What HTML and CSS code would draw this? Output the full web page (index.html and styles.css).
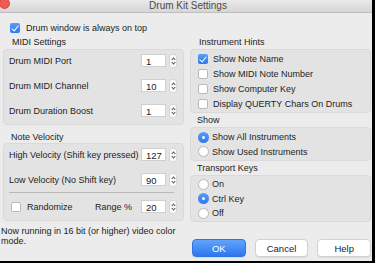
FILE: index.html
```html
<!DOCTYPE html>
<html lang="en">
<head>
    <meta charset="UTF-8">
    <title>Drum Kit Settings</title>
    <link rel="stylesheet" href="styles.css">
</head>
<body>
    <div class="window">
        <div class="titlebar">
            <span class="close"></span>
            Drum Kit Settings
        </div>
        <div class="content">
            <div class="check topCheck"><span class="box on"></span>Drum window is always on top</div>
            <div class="cols">
                <div class="col">
                    <div class="groupTitle">MIDI Settings</div>
                    <div class="panel midi">
                        <div class="field"><span>Drum MIDI Port</span><span class="spin"><span class="num">1</span><span class="stepper"></span></span></div>
                        <div class="field"><span>Drum MIDI Channel</span><span class="spin"><span class="num">10</span><span class="stepper"></span></span></div>
                        <div class="field"><span>Drum Duration Boost</span><span class="spin"><span class="num">1</span><span class="stepper"></span></span></div>
                    </div>
                    <div class="groupTitle second">Note Velocity</div>
                    <div class="panel velocity">
                        <div class="field"><span>High Velocity (Shift key pressed)</span><span class="spin"><span class="num">127</span><span class="stepper"></span></span></div>
                        <div class="field"><span>Low Velocity (No Shift key)</span><span class="spin"><span class="num">90</span><span class="stepper"></span></span></div>
                        <div class="sep"></div>
                        <div class="field">
                            <span class="check"><span class="box"></span>Randomize</span>
                            <span class="range">Range %</span>
                            <span class="spin"><span class="num">20</span><span class="stepper"></span></span>
                        </div>
                    </div>
                    <p class="status">Now running in 16 bit (or higher) video color mode.</p>
                </div>
                <div class="col">
                    <div class="groupTitle">Instrument Hints</div>
                    <div class="panel hints">
                        <div class="check"><span class="box on"></span>Show Note Name</div>
                        <div class="check"><span class="box"></span>Show MIDI Note Number</div>
                        <div class="check"><span class="box"></span>Show Computer Key</div>
                        <div class="check"><span class="box"></span>Display QUERTY Chars On Drums</div>
                    </div>
                    <div class="groupTitle small">Show</div>
                    <div class="panel radios">
                        <div class="radio"><span class="dot on"></span>Show All Instruments</div>
                        <div class="radio"><span class="dot"></span>Show Used Instruments</div>
                    </div>
                    <div class="groupTitle small">Transport Keys</div>
                    <div class="panel radios transport">
                        <div class="radio"><span class="dot"></span>On</div>
                        <div class="radio"><span class="dot on"></span>Ctrl Key</div>
                        <div class="radio"><span class="dot"></span>Off</div>
                    </div>
                    <div class="buttons">
                        <button class="primary">OK</button>
                        <button>Cancel</button>
                        <button>Help</button>
                    </div>
                </div>
            </div>
        </div>
    </div>
</body>
</html>
```

FILE: styles.css
```css
body {
    margin: 0;
    padding: 0;
    overflow: hidden;
    background-color: #000;
    font-family: "Liberation Sans", Arial, sans-serif;
    font-size: 9px;
    color: #232323;
}

.window {
    width: 372px;
    height: 261px;
    background-color: #ececec;
    position: relative;
    overflow: hidden;
}

.titlebar {
    height: 12px;
    line-height: 12px;
    text-align: center;
    font-size: 10px;
    color: #4a4a4a;
    background: linear-gradient(#e9e9e9, #d6d6d6);
    border-bottom: 1px solid #bdbdbd;
    padding-left: 4px;
}

.close {
    position: absolute;
    left: -1px;
    top: -2px;
    width: 11px;
    height: 11px;
    border-radius: 50%;
    background-color: #ee5b55;
    border: 1px solid #d9433d;
    box-sizing: border-box;
}

.content {
    padding: 7px 1px 0 3px;
}

.check, .radio {
    display: flex;
    align-items: center;
    gap: 5px;
    height: 15px;
}

.topCheck {
    padding-left: 7px;
    gap: 6px;
}

.box {
    width: 10px;
    height: 10px;
    box-sizing: border-box;
    border: 1px solid #b9b9b9;
    border-radius: 2px;
    background-color: #fff;
    position: relative;
}

.box.on {
    border: none;
    background: linear-gradient(#5a9cf8, #2d78f0);
}

.box.on::after {
    content: "";
    position: absolute;
    left: 3px;
    top: 1px;
    width: 3px;
    height: 6px;
    border: solid #fff;
    border-width: 0 1.5px 1.5px 0;
    transform: rotate(40deg);
}

.dot {
    width: 11px;
    height: 11px;
    box-sizing: border-box;
    border-radius: 50%;
    border: 1px solid #b9b9b9;
    background-color: #fff;
    position: relative;
}

.dot.on {
    border: none;
    background: linear-gradient(#5a9cf8, #2d78f0);
}

.dot.on::after {
    content: "";
    position: absolute;
    left: 4px;
    top: 4px;
    width: 3px;
    height: 3px;
    border-radius: 50%;
    background-color: #fff;
}

.cols {
    display: grid;
    grid-template-columns: 181px 181px;
    gap: 6px;
    margin-top: 2px;
}

.col {
    display: flex;
    flex-direction: column;
}

.groupTitle {
    height: 11px;
    line-height: 11px;
    padding-left: 9px;
    margin-bottom: 1px;
}

.groupTitle.second {
    margin-top: 7px;
    padding-left: 8px;
    margin-bottom: 0;
}

.groupTitle.small {
    margin-top: 2px;
    padding-left: 7px;
    margin-bottom: 1px;
}

.panel {
    background-color: #e3e3e3;
    border: 1px solid #d9d9d9;
    border-radius: 4px;
    box-sizing: border-box;
}

.midi {
    height: 76px;
    padding: 1px 6px 0 5px;
    display: flex;
    flex-direction: column;
    gap: 6px;
}

.velocity {
    height: 78px;
    padding: 1px 6px 0 5px;
    display: flex;
    flex-direction: column;
    gap: 6px;
}

.field {
    display: flex;
    align-items: center;
    height: 19px;
}

.field > span:first-child {
    flex: 1;
}

.velocity .field .check {
    padding-left: 2px;
    gap: 6px;
}

.range {
    margin-right: 9px;
}

.sep {
    height: 1px;
    background-color: #b8b8b8;
    margin: -3px 3px -2px 0;
}

.spin {
    display: flex;
    align-items: center;
    gap: 3px;
}

.num {
    width: 25px;
    height: 13px;
    line-height: 13px;
    box-sizing: border-box;
    background-color: #fff;
    border: 1px solid #cfcfcf;
    padding-left: 4px;
    font-size: 9.5px;
}

.stepper {
    width: 8px;
    height: 14px;
    border-radius: 3px;
    background-color: #fafafa;
    border: 1px solid #d6d6d6;
    box-sizing: border-box;
    position: relative;
}

.stepper::before, .stepper::after {
    content: "";
    position: absolute;
    left: 2px;
    width: 2px;
    height: 2px;
    border: solid #555;
    border-width: 1px 0 0 1px;
}

.stepper::before {
    top: 3px;
    transform: rotate(45deg);
}

.stepper::after {
    top: 6px;
    transform: rotate(225deg);
}

.status {
    margin: 5px 0 0 -2px;
    line-height: 10px;
    width: 180px;
}

.hints {
    height: 64px;
    padding: 1px 0 0 7px;
}

.radios {
    padding: 2px 0 0 7px;
    height: 34px;
}

.radio {
    gap: 3px;
}

.transport {
    height: 47px;
    padding-top: 1px;
}

.radios .radio {
    height: 14.5px;
}

.buttons {
    display: flex;
    gap: 9px;
    margin-top: 17px;
    padding-left: 2px;
}

button {
    width: 56px;
    height: 18px;
    border: 1px solid #d2d2d2;
    border-radius: 4px;
    background-color: #fff;
    font-family: inherit;
    font-size: 9.5px;
    color: #232323;
    padding: 0;
    box-shadow: 0 1px 1px rgba(0, 0, 0, .08);
}

button.primary {
    background: linear-gradient(#63a4fa, #2c77ee);
    border-color: #2f74e0;
    color: #fff;
}
```
